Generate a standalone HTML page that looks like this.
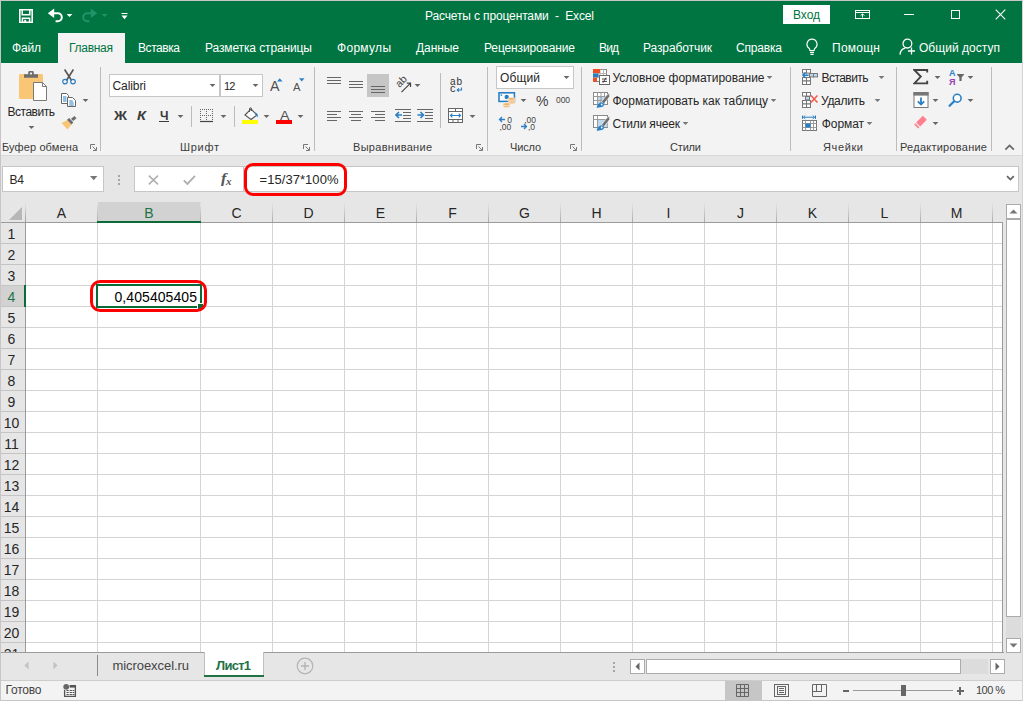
<!DOCTYPE html>
<html lang="ru"><head><meta charset="utf-8"><title>Расчеты с процентами - Excel</title>
<style>
html,body{margin:0;padding:0;}
body{width:1023px;height:701px;overflow:hidden;background:#e6e6e6;font-family:"Liberation Sans", sans-serif;}
#app{position:relative;width:1023px;height:701px;overflow:hidden;}
#app div,#app svg{position:absolute;box-sizing:border-box;}
.t{position:absolute;white-space:pre;line-height:20px;height:20px;}
</style></head>
<body><div id="app">
<div style="left:0px;top:0px;width:1023px;height:701px;background:#e6e6e6;"></div>
<div style="left:0px;top:0px;width:1023px;height:1px;background:#c9c5c6;"></div>
<div style="left:0px;top:0px;width:1px;height:701px;background:#c9c5c6;"></div>
<div style="left:1px;top:1px;width:1022px;height:62px;background:#007541;"></div>
<div style="left:58px;top:33px;width:67px;height:30px;background:#f3f3f3;"></div>
<div style="left:1px;top:63px;width:1022px;height:92px;background:#f3f3f3;"></div>
<div style="left:1px;top:155px;width:1022px;height:1px;background:#d8d8d8;"></div>
<span class="t" style="left:425px;top:6px;font-size:12px;color:#ffffff;letter-spacing:-0.138px;">Расчеты с процентами  -  Excel</span>
<div style="left:783px;top:5px;width:47px;height:19px;background:#ffffff;"></div>
<span class="t" style="left:793px;top:5px;font-size:12px;color:#007541;letter-spacing:-0.052px;">Вход</span>
<span class="t" style="left:12px;top:38px;font-size:12px;color:#ffffff;letter-spacing:-0.172px;">Файл</span>
<span class="t" style="left:69px;top:38px;font-size:12px;color:#007541;letter-spacing:-0.281px;">Главная</span>
<span class="t" style="left:138px;top:38px;font-size:12px;color:#ffffff;letter-spacing:-0.435px;">Вставка</span>
<span class="t" style="left:205px;top:38px;font-size:12px;color:#ffffff;letter-spacing:-0.117px;">Разметка страницы</span>
<span class="t" style="left:337px;top:38px;font-size:12px;color:#ffffff;letter-spacing:0.297px;">Формулы</span>
<span class="t" style="left:416px;top:38px;font-size:12px;color:#ffffff;letter-spacing:-0.072px;">Данные</span>
<span class="t" style="left:484px;top:38px;font-size:12px;color:#ffffff;letter-spacing:-0.129px;">Рецензирование</span>
<span class="t" style="left:599px;top:38px;font-size:12px;color:#ffffff;letter-spacing:-0.859px;">Вид</span>
<span class="t" style="left:643px;top:38px;font-size:12px;color:#ffffff;letter-spacing:-0.098px;">Разработчик</span>
<span class="t" style="left:736px;top:38px;font-size:12px;color:#ffffff;letter-spacing:-0.180px;">Справка</span>
<span class="t" style="left:832px;top:38px;font-size:12px;color:#ffffff;letter-spacing:0.253px;">Помощн</span>
<span class="t" style="left:919px;top:38px;font-size:12px;color:#ffffff;letter-spacing:0.034px;">Общий доступ</span>
<span class="t" style="left:2px;top:137px;font-size:11px;color:#3a3a3a;letter-spacing:0.114px;">Буфер обмена</span>
<span class="t" style="left:180px;top:137px;font-size:11px;color:#3a3a3a;letter-spacing:0.699px;">Шрифт</span>
<span class="t" style="left:353px;top:137px;font-size:11px;color:#3a3a3a;letter-spacing:0.298px;">Выравнивание</span>
<span class="t" style="left:510px;top:137px;font-size:11px;color:#3a3a3a;letter-spacing:-0.160px;">Число</span>
<span class="t" style="left:670px;top:137px;font-size:11px;color:#3a3a3a;letter-spacing:-0.176px;">Стили</span>
<span class="t" style="left:823px;top:137px;font-size:11px;color:#3a3a3a;letter-spacing:0.619px;">Ячейки</span>
<span class="t" style="left:900px;top:137px;font-size:11px;color:#3a3a3a;letter-spacing:0.246px;">Редактирование</span>
<div style="left:100px;top:67px;width:1px;height:84px;background:#bcbcbc;"></div>
<div style="left:314px;top:67px;width:1px;height:84px;background:#bcbcbc;"></div>
<div style="left:487px;top:67px;width:1px;height:84px;background:#bcbcbc;"></div>
<div style="left:581px;top:67px;width:1px;height:84px;background:#bcbcbc;"></div>
<div style="left:790px;top:67px;width:1px;height:84px;background:#bcbcbc;"></div>
<div style="left:896px;top:67px;width:1px;height:84px;background:#bcbcbc;"></div>
<div style="left:991px;top:67px;width:1px;height:84px;background:#bcbcbc;"></div>
<div style="left:440px;top:73px;width:1px;height:55px;background:#bcbcbc;"></div>
<div style="left:191px;top:106px;width:1px;height:21px;background:#bcbcbc;"></div>
<div style="left:234px;top:106px;width:1px;height:21px;background:#bcbcbc;"></div>
<span class="t" style="left:7.5px;top:102px;font-size:12px;color:#262626;letter-spacing:-0.482px;">Вставить</span>
<div style="left:109px;top:74px;width:111px;height:23px;background:#ffffff;border:1px solid #c6c6c6;"></div>
<div style="left:220px;top:74px;width:43px;height:23px;background:#ffffff;border:1px solid #c6c6c6;"></div>
<span class="t" style="left:112.5px;top:76px;font-size:12px;color:#262626;letter-spacing:-0.086px;">Calibri</span>
<span class="t" style="left:224px;top:76px;font-size:11px;color:#262626;letter-spacing:-0.750px;">12</span>
<span class="t" style="left:113.5px;top:106px;font-size:12px;color:#3b3b3b;font-weight:bold;transform:scaleX(1.197);transform-origin:0 0;">Ж</span>
<span class="t" style="left:137px;top:106px;font-size:12px;color:#3b3b3b;font-weight:bold;font-style:italic;transform:scaleX(1.218);transform-origin:0 0;">К</span>
<span class="t" style="left:159.5px;top:106px;font-size:12px;color:#3b3b3b;font-weight:bold;transform:scaleX(1.007);transform-origin:0 0;">Ч</span>
<div style="left:159px;top:121px;width:10px;height:1px;background:#3b3b3b;"></div>
<div style="left:496px;top:66px;width:78px;height:23px;background:#ffffff;border:1px solid #c6c6c6;"></div>
<span class="t" style="left:500px;top:68px;font-size:12px;color:#262626;letter-spacing:0.125px;">Общий</span>
<span class="t" style="left:535.5px;top:91px;font-size:15px;color:#444444;transform:scaleX(0.937);transform-origin:0 0;">%</span>
<span class="t" style="left:556px;top:90px;font-size:8.5px;color:#444444;letter-spacing:-0.094px;">000</span>
<span class="t" style="left:612.5px;top:68px;font-size:12px;color:#262626;letter-spacing:-0.031px;">Условное форматирование</span>
<span class="t" style="left:612.5px;top:91px;font-size:12px;color:#262626;letter-spacing:-0.027px;">Форматировать как таблицу</span>
<span class="t" style="left:612.5px;top:114px;font-size:12px;color:#262626;letter-spacing:-0.177px;">Стили ячеек</span>
<span class="t" style="left:821.5px;top:68px;font-size:12px;color:#262626;letter-spacing:-0.554px;">Вставить</span>
<span class="t" style="left:821px;top:91px;font-size:12px;color:#262626;letter-spacing:-0.305px;">Удалить</span>
<span class="t" style="left:821.8px;top:114px;font-size:12px;color:#262626;letter-spacing:-0.088px;">Формат</span>
<div style="left:2px;top:166px;width:102px;height:26px;background:#ffffff;border:1px solid #c6c6c6;"></div>
<span class="t" style="left:9.5px;top:170px;font-size:12px;color:#262626;letter-spacing:-0.188px;">B4</span>
<svg style="left:90px;top:176px" width="8" height="5" viewBox="0 0 8 5"><path d="M0 0h7.4L3.7 4.2Z" fill="#777"/></svg>
<div style="left:118px;top:175px;width:2px;height:2px;background:#a6a6a6;"></div>
<div style="left:118px;top:179px;width:2px;height:2px;background:#a6a6a6;"></div>
<div style="left:118px;top:183px;width:2px;height:2px;background:#a6a6a6;"></div>
<div style="left:134px;top:166px;width:885px;height:26px;background:#ffffff;border:1px solid #c6c6c6;"></div>
<div style="left:243px;top:167px;width:1px;height:24px;background:#c6c6c6;"></div>
<svg style="left:148px;top:175px" width="11" height="10" viewBox="0 0 11 10"><path d="M0.8 0.6l9.2 8.8M10 0.6L0.8 9.400" stroke="#b0b0b0" stroke-width="1.600" fill="none"/></svg>
<svg style="left:183px;top:175px" width="13" height="10" viewBox="0 0 13 10"><path d="M0.8 5.400l3.600 3.600L12 0.800" stroke="#b0b0b0" stroke-width="1.900" fill="none"/></svg>
<span class="t" style="left:220.5px;top:169px;font-size:14px;color:#555555;font-weight:bold;font-style:italic;transform:scaleX(1.177);transform-origin:0 0;font-family:Liberation Serif,serif;">f</span>
<span class="t" style="left:225.5px;top:172px;font-size:10px;color:#555555;font-weight:bold;font-style:italic;transform:scaleX(1.100);transform-origin:0 0;font-family:Liberation Serif,serif;">x</span>
<span class="t" style="left:259.5px;top:170px;font-size:13px;color:#262626;letter-spacing:0.056px;">=15/37*100%</span>
<svg style="left:1006px;top:175px" width="9" height="7" viewBox="0 0 9 7"><path d="M1 1.200l3.400 3.400L7.800 1.200" stroke="#666" stroke-width="1.800" fill="none"/></svg>
<div style="left:244px;top:163px;width:103px;height:33px;background:transparent;border:3px solid #ff0000;border-radius:9px;"></div>
<div style="left:0px;top:202px;width:1023px;height:451px;background:#e6e6e6;"></div>
<div style="left:26px;top:223px;width:977px;height:430px;background:#ffffff;"></div>
<div style="left:98px;top:202px;width:103px;height:20px;background:#d2d2d2;"></div>
<div style="left:98px;top:221px;width:103px;height:2px;background:#217346;"></div>
<div style="left:1px;top:286px;width:24px;height:20px;background:#d2d2d2;"></div>
<div style="left:24px;top:285px;width:2px;height:22px;background:#217346;"></div>
<div style="left:97px;top:223px;width:1px;height:429px;background:#d4d4d4;"></div>
<div style="left:97px;top:203px;width:1px;height:19px;background:linear-gradient(#e6e6e6,#ababab);"></div>
<div style="left:200px;top:223px;width:1px;height:429px;background:#d4d4d4;"></div>
<div style="left:200px;top:203px;width:1px;height:19px;background:linear-gradient(#e6e6e6,#ababab);"></div>
<div style="left:272px;top:223px;width:1px;height:429px;background:#d4d4d4;"></div>
<div style="left:272px;top:203px;width:1px;height:19px;background:linear-gradient(#e6e6e6,#ababab);"></div>
<div style="left:344px;top:223px;width:1px;height:429px;background:#d4d4d4;"></div>
<div style="left:344px;top:203px;width:1px;height:19px;background:linear-gradient(#e6e6e6,#ababab);"></div>
<div style="left:416px;top:223px;width:1px;height:429px;background:#d4d4d4;"></div>
<div style="left:416px;top:203px;width:1px;height:19px;background:linear-gradient(#e6e6e6,#ababab);"></div>
<div style="left:488px;top:223px;width:1px;height:429px;background:#d4d4d4;"></div>
<div style="left:488px;top:203px;width:1px;height:19px;background:linear-gradient(#e6e6e6,#ababab);"></div>
<div style="left:560px;top:223px;width:1px;height:429px;background:#d4d4d4;"></div>
<div style="left:560px;top:203px;width:1px;height:19px;background:linear-gradient(#e6e6e6,#ababab);"></div>
<div style="left:632px;top:223px;width:1px;height:429px;background:#d4d4d4;"></div>
<div style="left:632px;top:203px;width:1px;height:19px;background:linear-gradient(#e6e6e6,#ababab);"></div>
<div style="left:704px;top:223px;width:1px;height:429px;background:#d4d4d4;"></div>
<div style="left:704px;top:203px;width:1px;height:19px;background:linear-gradient(#e6e6e6,#ababab);"></div>
<div style="left:776px;top:223px;width:1px;height:429px;background:#d4d4d4;"></div>
<div style="left:776px;top:203px;width:1px;height:19px;background:linear-gradient(#e6e6e6,#ababab);"></div>
<div style="left:848px;top:223px;width:1px;height:429px;background:#d4d4d4;"></div>
<div style="left:848px;top:203px;width:1px;height:19px;background:linear-gradient(#e6e6e6,#ababab);"></div>
<div style="left:920px;top:223px;width:1px;height:429px;background:#d4d4d4;"></div>
<div style="left:920px;top:203px;width:1px;height:19px;background:linear-gradient(#e6e6e6,#ababab);"></div>
<div style="left:992px;top:223px;width:1px;height:429px;background:#d4d4d4;"></div>
<div style="left:992px;top:203px;width:1px;height:19px;background:linear-gradient(#e6e6e6,#ababab);"></div>
<div style="left:26px;top:243px;width:976px;height:1px;background:#d4d4d4;"></div>
<div style="left:1px;top:243px;width:24px;height:1px;background:#c4c4c4;"></div>
<div style="left:26px;top:264px;width:976px;height:1px;background:#d4d4d4;"></div>
<div style="left:1px;top:264px;width:24px;height:1px;background:#c4c4c4;"></div>
<div style="left:26px;top:285px;width:976px;height:1px;background:#d4d4d4;"></div>
<div style="left:1px;top:285px;width:24px;height:1px;background:#c4c4c4;"></div>
<div style="left:26px;top:306px;width:976px;height:1px;background:#d4d4d4;"></div>
<div style="left:1px;top:306px;width:24px;height:1px;background:#c4c4c4;"></div>
<div style="left:26px;top:327px;width:976px;height:1px;background:#d4d4d4;"></div>
<div style="left:1px;top:327px;width:24px;height:1px;background:#c4c4c4;"></div>
<div style="left:26px;top:348px;width:976px;height:1px;background:#d4d4d4;"></div>
<div style="left:1px;top:348px;width:24px;height:1px;background:#c4c4c4;"></div>
<div style="left:26px;top:369px;width:976px;height:1px;background:#d4d4d4;"></div>
<div style="left:1px;top:369px;width:24px;height:1px;background:#c4c4c4;"></div>
<div style="left:26px;top:390px;width:976px;height:1px;background:#d4d4d4;"></div>
<div style="left:1px;top:390px;width:24px;height:1px;background:#c4c4c4;"></div>
<div style="left:26px;top:411px;width:976px;height:1px;background:#d4d4d4;"></div>
<div style="left:1px;top:411px;width:24px;height:1px;background:#c4c4c4;"></div>
<div style="left:26px;top:432px;width:976px;height:1px;background:#d4d4d4;"></div>
<div style="left:1px;top:432px;width:24px;height:1px;background:#c4c4c4;"></div>
<div style="left:26px;top:453px;width:976px;height:1px;background:#d4d4d4;"></div>
<div style="left:1px;top:453px;width:24px;height:1px;background:#c4c4c4;"></div>
<div style="left:26px;top:474px;width:976px;height:1px;background:#d4d4d4;"></div>
<div style="left:1px;top:474px;width:24px;height:1px;background:#c4c4c4;"></div>
<div style="left:26px;top:495px;width:976px;height:1px;background:#d4d4d4;"></div>
<div style="left:1px;top:495px;width:24px;height:1px;background:#c4c4c4;"></div>
<div style="left:26px;top:516px;width:976px;height:1px;background:#d4d4d4;"></div>
<div style="left:1px;top:516px;width:24px;height:1px;background:#c4c4c4;"></div>
<div style="left:26px;top:537px;width:976px;height:1px;background:#d4d4d4;"></div>
<div style="left:1px;top:537px;width:24px;height:1px;background:#c4c4c4;"></div>
<div style="left:26px;top:558px;width:976px;height:1px;background:#d4d4d4;"></div>
<div style="left:1px;top:558px;width:24px;height:1px;background:#c4c4c4;"></div>
<div style="left:26px;top:579px;width:976px;height:1px;background:#d4d4d4;"></div>
<div style="left:1px;top:579px;width:24px;height:1px;background:#c4c4c4;"></div>
<div style="left:26px;top:600px;width:976px;height:1px;background:#d4d4d4;"></div>
<div style="left:1px;top:600px;width:24px;height:1px;background:#c4c4c4;"></div>
<div style="left:26px;top:621px;width:976px;height:1px;background:#d4d4d4;"></div>
<div style="left:1px;top:621px;width:24px;height:1px;background:#c4c4c4;"></div>
<div style="left:26px;top:642px;width:976px;height:1px;background:#d4d4d4;"></div>
<div style="left:1px;top:642px;width:24px;height:1px;background:#c4c4c4;"></div>
<div style="left:25px;top:203px;width:1px;height:19px;background:linear-gradient(#e6e6e6,#9b9b9b);"></div>
<div style="left:25px;top:222px;width:1px;height:431px;background:#9b9b9b;"></div>
<div style="left:1px;top:222px;width:1002px;height:1px;background:#9b9b9b;"></div>
<div style="left:1002px;top:222px;width:1px;height:431px;background:#9b9b9b;"></div>
<div style="left:1px;top:652px;width:1002px;height:1px;background:#9b9b9b;"></div>
<svg style="left:8px;top:206px" width="15" height="15" viewBox="0 0 15 15"><path d="M14 1V14H1Z" fill="#b7b7b7"/></svg>
<span class="t" style="left:55.5px;top:203px;font-size:14px;color:#262626;width:12px;text-align:center;">A</span>
<span class="t" style="left:143.0px;top:203px;font-size:14px;color:#217346;width:12px;text-align:center;">B</span>
<span class="t" style="left:230.5px;top:203px;font-size:14px;color:#262626;width:12px;text-align:center;">C</span>
<span class="t" style="left:302.5px;top:203px;font-size:14px;color:#262626;width:12px;text-align:center;">D</span>
<span class="t" style="left:374.5px;top:203px;font-size:14px;color:#262626;width:12px;text-align:center;">E</span>
<span class="t" style="left:446.5px;top:203px;font-size:14px;color:#262626;width:12px;text-align:center;">F</span>
<span class="t" style="left:518.5px;top:203px;font-size:14px;color:#262626;width:12px;text-align:center;">G</span>
<span class="t" style="left:590.5px;top:203px;font-size:14px;color:#262626;width:12px;text-align:center;">H</span>
<span class="t" style="left:662.5px;top:203px;font-size:14px;color:#262626;width:12px;text-align:center;">I</span>
<span class="t" style="left:734.5px;top:203px;font-size:14px;color:#262626;width:12px;text-align:center;">J</span>
<span class="t" style="left:806.5px;top:203px;font-size:14px;color:#262626;width:12px;text-align:center;">K</span>
<span class="t" style="left:878.5px;top:203px;font-size:14px;color:#262626;width:12px;text-align:center;">L</span>
<span class="t" style="left:950.5px;top:203px;font-size:14px;color:#262626;width:12px;text-align:center;">M</span>
<span class="t" style="left:0px;top:224px;font-size:14px;color:#262626;width:23px;text-align:center;">1</span>
<span class="t" style="left:0px;top:245px;font-size:14px;color:#262626;width:23px;text-align:center;">2</span>
<span class="t" style="left:0px;top:266px;font-size:14px;color:#262626;width:23px;text-align:center;">3</span>
<span class="t" style="left:0px;top:287px;font-size:14px;color:#217346;width:23px;text-align:center;">4</span>
<span class="t" style="left:0px;top:308px;font-size:14px;color:#262626;width:23px;text-align:center;">5</span>
<span class="t" style="left:0px;top:329px;font-size:14px;color:#262626;width:23px;text-align:center;">6</span>
<span class="t" style="left:0px;top:350px;font-size:14px;color:#262626;width:23px;text-align:center;">7</span>
<span class="t" style="left:0px;top:371px;font-size:14px;color:#262626;width:23px;text-align:center;">8</span>
<span class="t" style="left:0px;top:392px;font-size:14px;color:#262626;width:23px;text-align:center;">9</span>
<span class="t" style="left:0px;top:413px;font-size:14px;color:#262626;width:23px;text-align:center;">10</span>
<span class="t" style="left:0px;top:434px;font-size:14px;color:#262626;width:23px;text-align:center;">11</span>
<span class="t" style="left:0px;top:455px;font-size:14px;color:#262626;width:23px;text-align:center;">12</span>
<span class="t" style="left:0px;top:476px;font-size:14px;color:#262626;width:23px;text-align:center;">13</span>
<span class="t" style="left:0px;top:497px;font-size:14px;color:#262626;width:23px;text-align:center;">14</span>
<span class="t" style="left:0px;top:518px;font-size:14px;color:#262626;width:23px;text-align:center;">15</span>
<span class="t" style="left:0px;top:539px;font-size:14px;color:#262626;width:23px;text-align:center;">16</span>
<span class="t" style="left:0px;top:560px;font-size:14px;color:#262626;width:23px;text-align:center;">17</span>
<span class="t" style="left:0px;top:581px;font-size:14px;color:#262626;width:23px;text-align:center;">18</span>
<span class="t" style="left:0px;top:602px;font-size:14px;color:#262626;width:23px;text-align:center;">19</span>
<span class="t" style="left:0px;top:623px;font-size:14px;color:#262626;width:23px;text-align:center;">20</span>
<span class="t" style="left:0px;top:644px;font-size:14px;color:#262626;width:23px;text-align:center;">21</span>
<div style="left:96px;top:284px;width:106px;height:24px;background:transparent;border:2px solid #0b6b38;"></div>
<div style="left:197px;top:303px;width:6px;height:6px;background:#0b6b38;border-left:1px solid #fff;border-top:1px solid #fff;"></div>
<span class="t" style="left:114.5px;top:287px;font-size:14px;color:#000000;letter-spacing:0.073px;">0,405405405</span>
<div style="left:90px;top:280px;width:117px;height:32px;background:transparent;border:3px solid #ff0000;border-radius:10px;"></div>
<div style="left:1006px;top:204px;width:15px;height:15px;background:#ffffff;border:1px solid #ababab;"></div>
<div style="left:1006px;top:219px;width:15px;height:398px;background:#ffffff;border:1px solid #ababab;"></div>
<div style="left:1006px;top:617px;width:15px;height:21px;background:#dcdcdc;"></div>
<div style="left:1006px;top:638px;width:15px;height:15px;background:#ffffff;border:1px solid #ababab;"></div>
<div style="left:0px;top:653px;width:1023px;height:27px;background:#e6e6e6;"></div>
<div style="left:1px;top:652px;width:1003px;height:1px;background:#9b9b9b;"></div>
<div style="left:97px;top:655px;width:1px;height:21px;background:#8a8a8a;"></div>
<svg style="left:24px;top:661px" width="5" height="9" viewBox="0 0 5 9"><path d="M4.6 0.4v8L0.4 4.400z" fill="#c3c3c3"/></svg>
<svg style="left:53px;top:661px" width="5" height="9" viewBox="0 0 5 9"><path d="M0.4 0.4v8L4.600 4.400z" fill="#c3c3c3"/></svg>
<span class="t" style="left:112.5px;top:656px;font-size:13px;color:#444444;letter-spacing:-0.066px;">microexcel.ru</span>
<div style="left:204px;top:652px;width:60px;height:23px;background:#ffffff;border-left:1px solid #c0c0c0;border-right:1px solid #c0c0c0;"></div>
<div style="left:204px;top:675px;width:60px;height:2px;background:#217346;"></div>
<span class="t" style="left:216px;top:656px;font-size:13px;color:#217346;font-weight:bold;letter-spacing:-0.738px;">Лист1</span>
<svg style="left:296px;top:657px" width="18" height="18" viewBox="0 0 18 18"><circle cx="9" cy="9" r="7.800" fill="none" stroke="#b4b4b4" stroke-width="1.200"/><path d="M9 5v8M5 9h8" stroke="#b4b4b4" stroke-width="1.400"/></svg>
<div style="left:613px;top:662px;width:2px;height:2px;background:#a6a6a6;"></div>
<div style="left:613px;top:666px;width:2px;height:2px;background:#a6a6a6;"></div>
<div style="left:613px;top:670px;width:2px;height:2px;background:#a6a6a6;"></div>
<div style="left:630px;top:659px;width:15px;height:15px;background:#ffffff;border:1px solid #ababab;"></div>
<svg style="left:635px;top:662px" width="5" height="9" viewBox="0 0 5 9"><path d="M4.500 0.500v8L0.500 4.500z" fill="#666"/></svg>
<div style="left:646px;top:659px;width:315px;height:15px;background:#ffffff;border:1px solid #ababab;"></div>
<div style="left:961px;top:659px;width:27px;height:15px;background:#dcdcdc;"></div>
<div style="left:990px;top:659px;width:15px;height:15px;background:#ffffff;border:1px solid #ababab;"></div>
<svg style="left:995px;top:662px" width="5" height="9" viewBox="0 0 5 9"><path d="M0.500 0.500v8L4.500 4.500z" fill="#666"/></svg>
<div style="left:0px;top:680px;width:1023px;height:21px;background:#f3f3f3;"></div>
<div style="left:0px;top:680px;width:1023px;height:1px;background:#cdcdcd;"></div>
<div style="left:0px;top:700px;width:1023px;height:1px;background:#c9c5c6;"></div>
<div style="left:1022px;top:0px;width:1px;height:701px;background:#d4d4d4;"></div>
<div style="left:0px;top:0px;width:1px;height:701px;background:#c9c5c6;"></div>
<span class="t" style="left:5.5px;top:680px;font-size:12px;color:#444444;letter-spacing:-0.212px;">Готово</span>
<svg style="left:62px;top:682px" width="16" height="16" viewBox="0 0 16 16"><path d="M2.600 8v6.400h10.800V3.600" fill="none" stroke="#555" stroke-width="1.300"/><rect x="7.600" y="3" width="6.400" height="2.600" fill="#555"/><circle cx="4.200" cy="4.800" r="2.900" fill="#666"/><path d="M4.500 8.500h2.200M7.700 8.500h2.200M10.600 8.500h1.800M4.500 10.500h2.200M7.700 10.500h2.200M10.600 10.500h1.800M4.500 12.500h2.200M7.700 12.500h2.200M10.600 12.500h1.800" stroke="#555" stroke-width="1"/></svg>
<div style="left:725px;top:681px;width:37px;height:19px;background:#c6c6c6;"></div>
<svg style="left:736px;top:684px" width="13" height="13" viewBox="0 0 13 13"><path d="M0.500 0.500h12v12h-12zM0.500 4.500h12M0.500 8.500h12M4.500 0.500v12M8.500 0.500v12" fill="none" stroke="#666" stroke-width="1"/></svg>
<svg style="left:774px;top:684px" width="15" height="13" viewBox="0 0 15 13"><rect x="0.500" y="0.500" width="14" height="12" fill="none" stroke="#666"/><rect x="3.500" y="2.500" width="8" height="8" fill="none" stroke="#666"/><path d="M5 4.500h5M5 6.500h5M5 8.500h5" stroke="#666"/></svg>
<svg style="left:812px;top:684px" width="15" height="13" viewBox="0 0 15 13"><path d="M0.500 0.500h14v12h-14zM4.500 0.500v7M9.500 0.500v7.500M0.500 7.500h9.500" fill="none" stroke="#666" stroke-width="1"/></svg>
<span class="t" style="left:976px;top:680px;font-size:11px;color:#444444;letter-spacing:-0.551px;">100 %</span>
<div style="left:843px;top:690px;width:6px;height:2px;background:#666666;"></div>
<div style="left:853px;top:690px;width:100px;height:1px;background:#9a9a9a;"></div>
<div style="left:901px;top:685px;width:5px;height:11px;background:#666666;"></div>
<div style="left:957px;top:690px;width:7px;height:2px;background:#666666;"></div>
<div style="left:959px;top:687px;width:2px;height:8px;background:#666666;"></div>
<svg style="left:19px;top:9px" width="14" height="14" viewBox="0 0 14 14"><path d="M0.8 0.8h12.4v12.400H0.800z" fill="none" stroke="#fff" stroke-width="1.600"/><path d="M3.200 1v4.800h7.600V1" fill="none" stroke="#fff" stroke-width="1.500"/><path d="M3.400 13V9.200h7.200V13" fill="none" stroke="#fff" stroke-width="1.500"/><rect x="5.200" y="10.800" width="2" height="2.400" fill="#fff"/></svg>
<svg style="left:47px;top:8px" width="16" height="15" viewBox="0 0 16 15"><path d="M0.800 5.300L7.200 0.600V10z" fill="#fff"/><path d="M6.500 5.300h4.300a4 4 0 0 1 0 8H8.600" fill="none" stroke="#fff" stroke-width="2"/></svg>
<svg style="left:66.0px;top:14.0px" width="7" height="4" viewBox="0 0 7 4"><path d="M0.6 0h5.8L3.5 3.1Z" fill="#ffffff"/></svg>
<svg style="left:82px;top:8px" width="16" height="15" viewBox="0 0 16 15"><path d="M15.200 5.300L8.800 0.600V10z" fill="#1f9468"/><path d="M9.500 5.300H5.200a4 4 0 0 0 0 8h2.200" fill="none" stroke="#1f9468" stroke-width="2"/></svg>
<svg style="left:101.0px;top:14.0px" width="7" height="4" viewBox="0 0 7 4"><path d="M0.6 0h5.8L3.5 3.1Z" fill="#1f9468"/></svg>
<svg style="left:121px;top:12px" width="7" height="8" viewBox="0 0 7 8"><path d="M0.500 1.500h6" stroke="#fff" stroke-width="1"/><path d="M0.500 3.600h6L3.500 7.200Z" fill="#fff"/></svg>
<svg style="left:18px;top:70px" width="30" height="32" viewBox="0 0 30 32"><rect x="1" y="4" width="24" height="25" rx="1.5" fill="#f9c676"/>
<path d="M6 4.2h4.2v-1.8a1.3 1.3 0 0 1 1.3-1.3h3a1.3 1.3 0 0 1 1.3 1.3v1.8H20v3.6H6z" fill="#6d6d6d"/><rect x="12" y="2.6" width="2" height="1.8" fill="#f3f3f3"/>
<path d="M15.5 12.5h9l4 4V30.5h-13z" fill="#fff" stroke="#7a7a7a" stroke-width="1"/><path d="M24.5 12.5v4h4" fill="none" stroke="#7a7a7a" stroke-width="1"/></svg>
<svg style="left:28.0px;top:126.0px" width="7" height="4" viewBox="0 0 7 4"><path d="M0.6 0h5.8L3.5 3.1Z" fill="#666666"/></svg>
<svg style="left:61px;top:68px" width="16" height="17" viewBox="0 0 16 17"><path d="M3.6 1.5L10.6 12.5M12.4 1.5L5.4 12.5" stroke="#555" stroke-width="1.6" fill="none"/>
<circle cx="4" cy="13.6" r="2.3" fill="none" stroke="#2a7fc4" stroke-width="1.2"/><circle cx="12" cy="13.6" r="2.3" fill="none" stroke="#2a7fc4" stroke-width="1.2"/></svg>
<svg style="left:60px;top:92px" width="17" height="16" viewBox="0 0 17 16"><path d="M1.5 1.5h5l2 2V11.5h-7z" fill="#fff" stroke="#666" stroke-width="1"/>
<path d="M3 5h3.5M3 7h3.5M3 9h3.5" stroke="#2a7fc4" stroke-width="1"/>
<path d="M7.5 5.5h5l3 3V14.5h-8z" fill="#fff" stroke="#666" stroke-width="1"/>
<path d="M9.3 9h3.5M9.3 11h4.4M9.3 13h4.4" stroke="#2a7fc4" stroke-width="1"/></svg>
<svg style="left:82.0px;top:99.0px" width="7" height="4" viewBox="0 0 7 4"><path d="M0.6 0h5.8L3.5 3.1Z" fill="#666666"/></svg>
<svg style="left:60px;top:115px" width="18" height="15" viewBox="0 0 18 15"><path d="M1.5 8l6-3 4 4.5-4 5z" fill="#f9c676"/><path d="M7 4.8l2.2-1.8 4.2 4.6-2 2z" fill="#6d6d6d"/><path d="M11 3.8L14.5 1l2 2.2-3.3 2.8z" fill="#6d6d6d"/></svg>
<svg style="left:90px;top:144px" width="7" height="7" viewBox="0 0 7 7"><path d="M0.5 5V0.5H5" fill="none" stroke="#777" stroke-width="1"/><path d="M2.5 2.5L6 6M6.5 3v3.5H3" fill="none" stroke="#777" stroke-width="1"/></svg>
<svg style="left:303px;top:144px" width="7" height="7" viewBox="0 0 7 7"><path d="M0.5 5V0.5H5" fill="none" stroke="#777" stroke-width="1"/><path d="M2.5 2.5L6 6M6.5 3v3.5H3" fill="none" stroke="#777" stroke-width="1"/></svg>
<svg style="left:476px;top:144px" width="7" height="7" viewBox="0 0 7 7"><path d="M0.5 5V0.5H5" fill="none" stroke="#777" stroke-width="1"/><path d="M2.5 2.5L6 6M6.5 3v3.5H3" fill="none" stroke="#777" stroke-width="1"/></svg>
<svg style="left:570px;top:144px" width="7" height="7" viewBox="0 0 7 7"><path d="M0.5 5V0.5H5" fill="none" stroke="#777" stroke-width="1"/><path d="M2.5 2.5L6 6M6.5 3v3.5H3" fill="none" stroke="#777" stroke-width="1"/></svg>
<svg style="left:209.0px;top:84.0px" width="7" height="4" viewBox="0 0 7 4"><path d="M0.6 0h5.8L3.5 3.1Z" fill="#666666"/></svg>
<svg style="left:252.0px;top:84.0px" width="7" height="4" viewBox="0 0 7 4"><path d="M0.6 0h5.8L3.5 3.1Z" fill="#666666"/></svg>
<span class="t" style="left:269.5px;top:76px;font-size:14px;color:#505050;transform:scaleX(1.017);transform-origin:0 0;">A</span>
<svg style="left:277px;top:78px" width="6" height="4" viewBox="0 0 6 4"><path d="M0 3.5L2.75 0.3 5.5 3.5Z" fill="#2a7fc4"/></svg>
<span class="t" style="left:292.5px;top:77px;font-size:11px;color:#505050;transform:scaleX(1.021);transform-origin:0 0;">A</span>
<svg style="left:299px;top:78px" width="6" height="4" viewBox="0 0 6 4"><path d="M0 0.3h5.5L2.75 3.5Z" fill="#2a7fc4"/></svg>
<svg style="left:177.0px;top:115.0px" width="7" height="4" viewBox="0 0 7 4"><path d="M0.6 0h5.8L3.5 3.1Z" fill="#666666"/></svg>
<svg style="left:199px;top:109px" width="15" height="14" viewBox="0 0 15 14"><path d="M1.5 0v12M7.5 0v12M13.5 0v12M1 0.5h13M1 6.5h13" stroke="#666" stroke-width="1" stroke-dasharray="1 1" fill="none"/><path d="M1 12.5h13" stroke="#444" stroke-width="1.2"/></svg>
<svg style="left:220.0px;top:115.0px" width="7" height="4" viewBox="0 0 7 4"><path d="M0.6 0h5.8L3.5 3.1Z" fill="#666666"/></svg>
<svg style="left:242px;top:107px" width="18" height="17" viewBox="0 0 18 17"><path d="M3 8l6-6 6 6-6 4.5z" fill="#fff" stroke="#555" stroke-width="1.1"/><path d="M7.5 5V1.8a1 1 0 0 1 2 0V4" fill="none" stroke="#555" stroke-width="1"/>
<path d="M13.5 5.5c2.3 1 2.8 3.5 1.8 5.2-.4-1.6-1.2-2.8-2.6-3.7z" fill="#2a7fc4"/><rect x="0" y="13" width="16" height="4" fill="#ffff00"/></svg>
<svg style="left:263.0px;top:115.0px" width="7" height="4" viewBox="0 0 7 4"><path d="M0.6 0h5.8L3.5 3.1Z" fill="#666666"/></svg>
<span class="t" style="left:279.5px;top:106px;font-size:13px;color:#505050;transform:scaleX(1.095);transform-origin:0 0;">A</span>
<div style="left:276px;top:120px;width:16px;height:4px;background:#ff0000;"></div>
<svg style="left:297.0px;top:115.0px" width="7" height="4" viewBox="0 0 7 4"><path d="M0.6 0h5.8L3.5 3.1Z" fill="#666666"/></svg>
<div style="left:327px;top:77px;width:14px;height:1px;background:#666666;"></div>
<div style="left:327px;top:80px;width:14px;height:1px;background:#666666;"></div>
<div style="left:327px;top:83px;width:14px;height:1px;background:#666666;"></div>
<div style="left:349px;top:81px;width:14px;height:1px;background:#666666;"></div>
<div style="left:349px;top:84px;width:14px;height:1px;background:#666666;"></div>
<div style="left:349px;top:87px;width:14px;height:1px;background:#666666;"></div>
<div style="left:367px;top:74px;width:22px;height:23px;background:#c6c6c6;"></div>
<div style="left:371px;top:86px;width:14px;height:1px;background:#666666;"></div>
<div style="left:371px;top:89px;width:14px;height:1px;background:#666666;"></div>
<div style="left:371px;top:92px;width:14px;height:1px;background:#666666;"></div>
<div style="left:327px;top:111px;width:14px;height:1px;background:#666666;"></div>
<div style="left:327px;top:114px;width:10px;height:1px;background:#666666;"></div>
<div style="left:327px;top:117px;width:14px;height:1px;background:#666666;"></div>
<div style="left:327px;top:120px;width:10px;height:1px;background:#666666;"></div>
<div style="left:349px;top:111px;width:14px;height:1px;background:#666666;"></div>
<div style="left:351px;top:114px;width:10px;height:1px;background:#666666;"></div>
<div style="left:349px;top:117px;width:14px;height:1px;background:#666666;"></div>
<div style="left:351px;top:120px;width:10px;height:1px;background:#666666;"></div>
<div style="left:371px;top:111px;width:14px;height:1px;background:#666666;"></div>
<div style="left:375px;top:114px;width:10px;height:1px;background:#666666;"></div>
<div style="left:371px;top:117px;width:14px;height:1px;background:#666666;"></div>
<div style="left:375px;top:120px;width:10px;height:1px;background:#666666;"></div>
<svg style="left:394px;top:76px" width="19" height="18" viewBox="0 0 19 18"><text x="0" y="0" font-size="10.5" font-family="Liberation Sans, sans-serif" fill="#444" transform="translate(5.4,12) rotate(-45)">ab</text><path d="M7.5 16.2L16.3 7.4M12.800 7.200h3.700v3.700" fill="none" stroke="#444" stroke-width="1.200"/></svg>
<svg style="left:414.0px;top:84.0px" width="7" height="4" viewBox="0 0 7 4"><path d="M0.6 0h5.8L3.5 3.1Z" fill="#666666"/></svg>
<div style="left:395px;top:109px;width:16px;height:1px;background:#666666;"></div>
<div style="left:395px;top:121px;width:16px;height:1px;background:#666666;"></div>
<div style="left:403px;top:112px;width:8px;height:1px;background:#666666;"></div>
<div style="left:403px;top:115px;width:8px;height:1px;background:#666666;"></div>
<div style="left:403px;top:118px;width:8px;height:1px;background:#666666;"></div>
<svg style="left:395px;top:111px" width="8" height="8" viewBox="0 0 8 8"><path d="M7 4H1.5M4 1L1 4l3 3" fill="none" stroke="#2a7fc4" stroke-width="1.6"/></svg>
<div style="left:417px;top:109px;width:16px;height:1px;background:#666666;"></div>
<div style="left:417px;top:121px;width:16px;height:1px;background:#666666;"></div>
<div style="left:425px;top:112px;width:8px;height:1px;background:#666666;"></div>
<div style="left:425px;top:115px;width:8px;height:1px;background:#666666;"></div>
<div style="left:425px;top:118px;width:8px;height:1px;background:#666666;"></div>
<svg style="left:417px;top:111px" width="8" height="8" viewBox="0 0 8 8"><path d="M0.5 4H6M3.5 1l3 3-3 3" fill="none" stroke="#2a7fc4" stroke-width="1.6"/></svg>
<span class="t" style="left:450px;top:72px;font-size:10px;color:#333333;letter-spacing:0.875px;">ab</span>
<span class="t" style="left:450px;top:79px;font-size:10px;color:#333333;transform:scaleX(1.100);transform-origin:0 0;">c</span>
<svg style="left:456px;top:87px" width="7" height="6" viewBox="0 0 7 6"><path d="M5.5 0.5v2.500H1.500M3 1.300L1.200 3 3 4.700" fill="none" stroke="#2a7fc4" stroke-width="1.100"/></svg>
<svg style="left:448px;top:108px" width="16" height="16" viewBox="0 0 16 16"><rect x="0.5" y="0.5" width="14" height="14" fill="#fff" stroke="#666"/><path d="M0.5 3.5h14M0.5 11.5h14M7.5 0.5v3M5 11.5v3M10 11.5v3" stroke="#666" fill="none"/><path d="M2.5 7.5h10M4.3 5.7L2.5 7.5l1.8 1.8M10.7 5.7l1.8 1.8-1.8 1.8" stroke="#2a7fc4" stroke-width="1.1" fill="none"/></svg>
<svg style="left:469.0px;top:115.0px" width="7" height="4" viewBox="0 0 7 4"><path d="M0.6 0h5.8L3.5 3.1Z" fill="#666666"/></svg>
<svg style="left:563.0px;top:76.0px" width="7" height="4" viewBox="0 0 7 4"><path d="M0.6 0h5.8L3.5 3.1Z" fill="#666666"/></svg>
<svg style="left:498px;top:92px" width="18" height="16" viewBox="0 0 18 16"><rect x="1" y="0.8" width="15.4" height="8.6" fill="#fff" stroke="#2a7fc4" stroke-width="1.6"/><circle cx="8.7" cy="5" r="2.2" fill="#2a7fc4"/><rect x="2.6" y="2.4" width="1.6" height="1.4" fill="#2a7fc4"/><rect x="13.2" y="6.4" width="1.6" height="1.4" fill="#2a7fc4"/>
<g fill="#f3b267" stroke="#f3f3f3" stroke-width="0.7"><ellipse cx="13.5" cy="10.4" rx="3.6" ry="1.5"/><ellipse cx="13.5" cy="8.6" rx="3.6" ry="1.5"/><ellipse cx="13.5" cy="6.8" rx="3.6" ry="1.5"/><ellipse cx="8.6" cy="14" rx="3.6" ry="1.5"/><ellipse cx="8.6" cy="12.2" rx="3.6" ry="1.5"/></g></svg>
<svg style="left:520.0px;top:99.0px" width="7" height="4" viewBox="0 0 7 4"><path d="M0.6 0h5.8L3.5 3.1Z" fill="#666666"/></svg>
<svg style="left:498px;top:115px" width="17" height="16" viewBox="0 0 17 16"><path d="M7 4.5H1.5M4 2L1.5 4.5 4 7" fill="none" stroke="#2a7fc4" stroke-width="1.3"/><text x="9.3" y="7.8" font-size="8.5" font-family="Liberation Sans, sans-serif" fill="#444">0</text><text x="1.5" y="14.6" font-size="8.5" font-family="Liberation Sans, sans-serif" fill="#444">,00</text></svg>
<svg style="left:520px;top:115px" width="17" height="16" viewBox="0 0 17 16"><text x="4.2" y="7.8" font-size="8.5" font-family="Liberation Sans, sans-serif" fill="#444">,00</text><path d="M1 11.5h5.5M4 9l2.5 2.5L4 14" fill="none" stroke="#2a7fc4" stroke-width="1.3"/><text x="8" y="14.6" font-size="8.5" font-family="Liberation Sans, sans-serif" fill="#444">,0</text></svg>
<svg style="left:593px;top:69px" width="17" height="16" viewBox="0 0 17 16"><rect x="0.5" y="0.5" width="13" height="12" fill="#fff" stroke="#8a8a8a"/><path d="M0.5 4.5h13M0.5 8.5h13M7 0.5v12M10.5 0.5v12" stroke="#b5b5b5" fill="none"/>
<rect x="0" y="0" width="7" height="4" fill="#f04e23"/><rect x="0" y="4.6" width="5.6" height="3.6" fill="#2a7fc4"/><rect x="0" y="8.8" width="4" height="4" fill="#f04e23"/>
<rect x="6.5" y="6.5" width="10" height="9" fill="#fff" stroke="#666"/><path d="M9 10h5M9 12.4h5M13 8.6l-3 5.2" stroke="#444" stroke-width="1" fill="none"/></svg>
<svg style="left:766.0px;top:76.0px" width="7" height="4" viewBox="0 0 7 4"><path d="M0.6 0h5.8L3.5 3.1Z" fill="#777"/></svg>
<svg style="left:593px;top:92px" width="17" height="16" viewBox="0 0 17 16"><rect x="0.5" y="0.5" width="14" height="12" fill="#fff" stroke="#8a8a8a"/><rect x="4" y="4" width="7" height="8" fill="#bcd7ee"/><path d="M0.5 4.5h14M0.5 8.5h14M4.5 0.5v12M8 0.5v12M11.5 0.5v12" stroke="#9a9a9a" fill="none"/><path d="M13.4 3.6L16.6 1v3.600L11 11.800 8.400 10z" fill="#6d6d6d" stroke="#f3f3f3" stroke-width="0.700"/><path d="M3.800 15.900c.2-3 2.300-5.500 5.100-5.300 2.200.2 2.900 2.400 1.500 3.600-1.800 1.500-4.100.7-6.600 1.700z" fill="#2a7fc4"/><circle cx="8.700" cy="12.500" r="0.900" fill="#fff"/></svg>
<svg style="left:770.0px;top:99.0px" width="7" height="4" viewBox="0 0 7 4"><path d="M0.6 0h5.8L3.5 3.1Z" fill="#777"/></svg>
<svg style="left:593px;top:115px" width="17" height="16" viewBox="0 0 17 16"><rect x="0.5" y="0.5" width="14" height="12" fill="#fff" stroke="#8a8a8a"/><rect x="4" y="4" width="10.5" height="8" fill="#bcd7ee"/><path d="M0.5 4.5h14M4.5 0.5v12" stroke="#9a9a9a" fill="none"/><path d="M13.4 3.6L16.6 1v3.600L11 11.800 8.400 10z" fill="#6d6d6d" stroke="#f3f3f3" stroke-width="0.700"/><path d="M3.800 15.900c.2-3 2.300-5.500 5.100-5.300 2.200.2 2.900 2.400 1.500 3.600-1.800 1.500-4.100.7-6.600 1.700z" fill="#2a7fc4"/><circle cx="8.700" cy="12.500" r="0.900" fill="#fff"/></svg>
<svg style="left:682.0px;top:122.0px" width="7" height="4" viewBox="0 0 7 4"><path d="M0.6 0h5.8L3.5 3.1Z" fill="#777"/></svg>
<svg style="left:802px;top:69px" width="16" height="16" viewBox="0 0 16 16"><g fill="#fff" stroke="#777"><rect x="0.5" y="0.5" width="4" height="3.6"/><rect x="4.5" y="0.5" width="4" height="3.6"/><rect x="0.5" y="8.5" width="4" height="3.5"/><rect x="4.5" y="8.5" width="4" height="3.5"/><rect x="0.5" y="12" width="4" height="3.5"/><rect x="4.5" y="12" width="4" height="3.5"/></g>
<g fill="#bcd7ee" stroke="#777"><rect x="7.5" y="4.5" width="4" height="3.4"/><rect x="11.5" y="4.5" width="4" height="3.4"/></g>
<path d="M6.6 6.2H1M3.6 3.4L0.9 6.2l2.7 2.8" fill="none" stroke="#2a7fc4" stroke-width="1.5"/></svg>
<svg style="left:878.0px;top:76.0px" width="7" height="4" viewBox="0 0 7 4"><path d="M0.6 0h5.8L3.5 3.1Z" fill="#777"/></svg>
<svg style="left:802px;top:92px" width="16" height="16" viewBox="0 0 16 16"><g fill="#fff" stroke="#777"><rect x="0.5" y="0.5" width="4" height="3.6"/><rect x="4.5" y="0.5" width="4" height="3.6"/><rect x="0.5" y="8.5" width="4" height="3.5"/><rect x="4.5" y="8.5" width="4" height="3.5"/><rect x="0.5" y="12" width="4" height="3.5"/><rect x="4.5" y="12" width="4" height="3.5"/></g>
<rect x="3.5" y="4.5" width="4" height="3.4" fill="#bcd7ee" stroke="#777"/>
<path d="M9 3.6l6.4 7M15.4 3.6l-6.4 7" fill="none" stroke="#f4564a" stroke-width="1.5"/></svg>
<svg style="left:874.0px;top:99.0px" width="7" height="4" viewBox="0 0 7 4"><path d="M0.6 0h5.8L3.5 3.1Z" fill="#777"/></svg>
<svg style="left:802px;top:115px" width="16" height="16" viewBox="0 0 16 16"><path d="M0.5 0.5v3.4M13.5 0.5v3.4M1.5 2.2h11M3.2 0.6L1.4 2.2l1.8 1.6M10.8 0.6l1.8 1.6-1.8 1.6" fill="none" stroke="#2a7fc4" stroke-width="1"/>
<rect x="0.5" y="5.5" width="14" height="10" fill="#fff" stroke="#777"/><path d="M0.5 8.5h14M0.5 12.5h14M3.5 5.5v10M8.5 5.5v10M11.5 5.5v10" stroke="#9a9a9a" fill="none"/><rect x="3.5" y="8.5" width="5" height="4" fill="#2a7fc4"/></svg>
<svg style="left:866.0px;top:122.0px" width="7" height="4" viewBox="0 0 7 4"><path d="M0.6 0h5.8L3.5 3.1Z" fill="#777"/></svg>
<svg style="left:913px;top:69px" width="16" height="16" viewBox="0 0 16 16"><path d="M14.2 3.6V1H1.4l6.4 6.6L1.4 14.4H14.2V11.8" fill="none" stroke="#444" stroke-width="1.9" stroke-linejoin="miter"/></svg>
<svg style="left:934.0px;top:76.0px" width="7" height="4" viewBox="0 0 7 4"><path d="M0.6 0h5.8L3.5 3.1Z" fill="#666666"/></svg>
<span class="t" style="left:949px;top:63px;font-size:9.5px;color:#2a7fc4;font-weight:bold;transform:scaleX(0.945);transform-origin:0 0;">A</span>
<span class="t" style="left:949px;top:72px;font-size:9.5px;color:#9b3fb5;font-weight:bold;transform:scaleX(0.952);transform-origin:0 0;">Я</span>
<svg style="left:956px;top:73px" width="9" height="9" viewBox="0 0 9 9"><path d="M0.6 1h7.8L5.6 4.4V8H3.4V4.4z" fill="#666"/></svg>
<svg style="left:967.0px;top:76.0px" width="7" height="4" viewBox="0 0 7 4"><path d="M0.6 0h5.8L3.5 3.1Z" fill="#666666"/></svg>
<svg style="left:913px;top:92px" width="16" height="16" viewBox="0 0 16 16"><rect x="1" y="0.5" width="14" height="15" fill="#fff" stroke="#777"/><rect x="0.5" y="0" width="15" height="3.6" fill="#777"/><path d="M8 5.5v7M4.8 9.4L8 12.6l3.2-3.2" fill="none" stroke="#2a7fc4" stroke-width="1.8"/></svg>
<svg style="left:932.0px;top:99.0px" width="7" height="4" viewBox="0 0 7 4"><path d="M0.6 0h5.8L3.5 3.1Z" fill="#666666"/></svg>
<svg style="left:948px;top:93px" width="15" height="14" viewBox="0 0 15 14"><circle cx="9.2" cy="5.2" r="3.9" fill="#fff" stroke="#2a7fc4" stroke-width="1.6"/><path d="M6.2 8.2L1.6 12.8" stroke="#2a7fc4" stroke-width="2.2" stroke-linecap="round"/></svg>
<svg style="left:967.0px;top:99.0px" width="7" height="4" viewBox="0 0 7 4"><path d="M0.6 0h5.8L3.5 3.1Z" fill="#666666"/></svg>
<svg style="left:914px;top:115px" width="14" height="14" viewBox="0 0 14 14"><path d="M8.8 0.8l4 4-6.6 6.6-4-4z" fill="#ff7f8e"/><path d="M1.4 8.2l4 4-1.2 1.2-4-4z" fill="#ff7f8e"/></svg>
<svg style="left:932.0px;top:122.0px" width="7" height="4" viewBox="0 0 7 4"><path d="M0.6 0h5.8L3.5 3.1Z" fill="#666666"/></svg>
<svg style="left:1004px;top:143px" width="12" height="8" viewBox="0 0 12 8"><path d="M1.4 6.6L5.6 2.4 9.8 6.6" fill="none" stroke="#666" stroke-width="1.7"/></svg>
<svg style="left:805px;top:38px" width="14" height="19" viewBox="0 0 14 19"><path d="M7 1.2a5 5 0 0 1 3 9c-.6.6-.9 1.3-.9 2.3H4.9c0-1-.3-1.700-.9-2.300a5 5 0 0 1 3-9z" fill="none" stroke="#fff" stroke-width="1.2"/><path d="M5 14.4h4M5.400 16.400h3.200" stroke="#fff" stroke-width="1.100"/></svg>
<svg style="left:899px;top:38px" width="18" height="18" viewBox="0 0 18 18"><circle cx="8.400" cy="5.600" r="4.400" fill="none" stroke="#fff" stroke-width="1.300"/><path d="M1 16.600c.3-3.600 2.500-5.800 5.200-6.400" fill="none" stroke="#fff" stroke-width="1.300"/><path d="M12.500 9.500v7M9 13h7" stroke="#fff" stroke-width="1.300"/></svg>
<svg style="left:855px;top:10px" width="15" height="9" viewBox="0 0 15 9"><rect x="0.500" y="0.500" width="14" height="8" fill="none" stroke="#fff"/><path d="M0.500 2.500h14" stroke="#fff"/><path d="M7.500 7.500V4M5.700 5.600L7.500 3.800l1.800 1.800" fill="none" stroke="#fff" stroke-width="1"/></svg>
<div style="left:904px;top:14px;width:10px;height:1px;background:#ffffff;"></div>
<div style="left:951px;top:10px;width:9px;height:9px;background:transparent;border:1px solid #fff;"></div>
<svg style="left:995px;top:9px" width="11" height="11" viewBox="0 0 11 11"><path d="M0.700 0.700l9.600 9.600M10.300 0.700L0.700 10.300" stroke="#fff" stroke-width="1.100"/></svg>
<svg style="left:1009px;top:209px" width="9" height="5" viewBox="0 0 9 5"><path d="M0.500 4.500h8L4.500 0.500z" fill="#777"/></svg>
<svg style="left:1009px;top:643px" width="9" height="5" viewBox="0 0 9 5"><path d="M0.500 0.500h8L4.500 4.500z" fill="#777"/></svg>
<div style="left:97px;top:221px;width:104px;height:2px;background:#0b6b38;"></div>
<div style="left:24px;top:285px;width:2px;height:22px;background:#0b6b38;"></div>
</div></body></html>
